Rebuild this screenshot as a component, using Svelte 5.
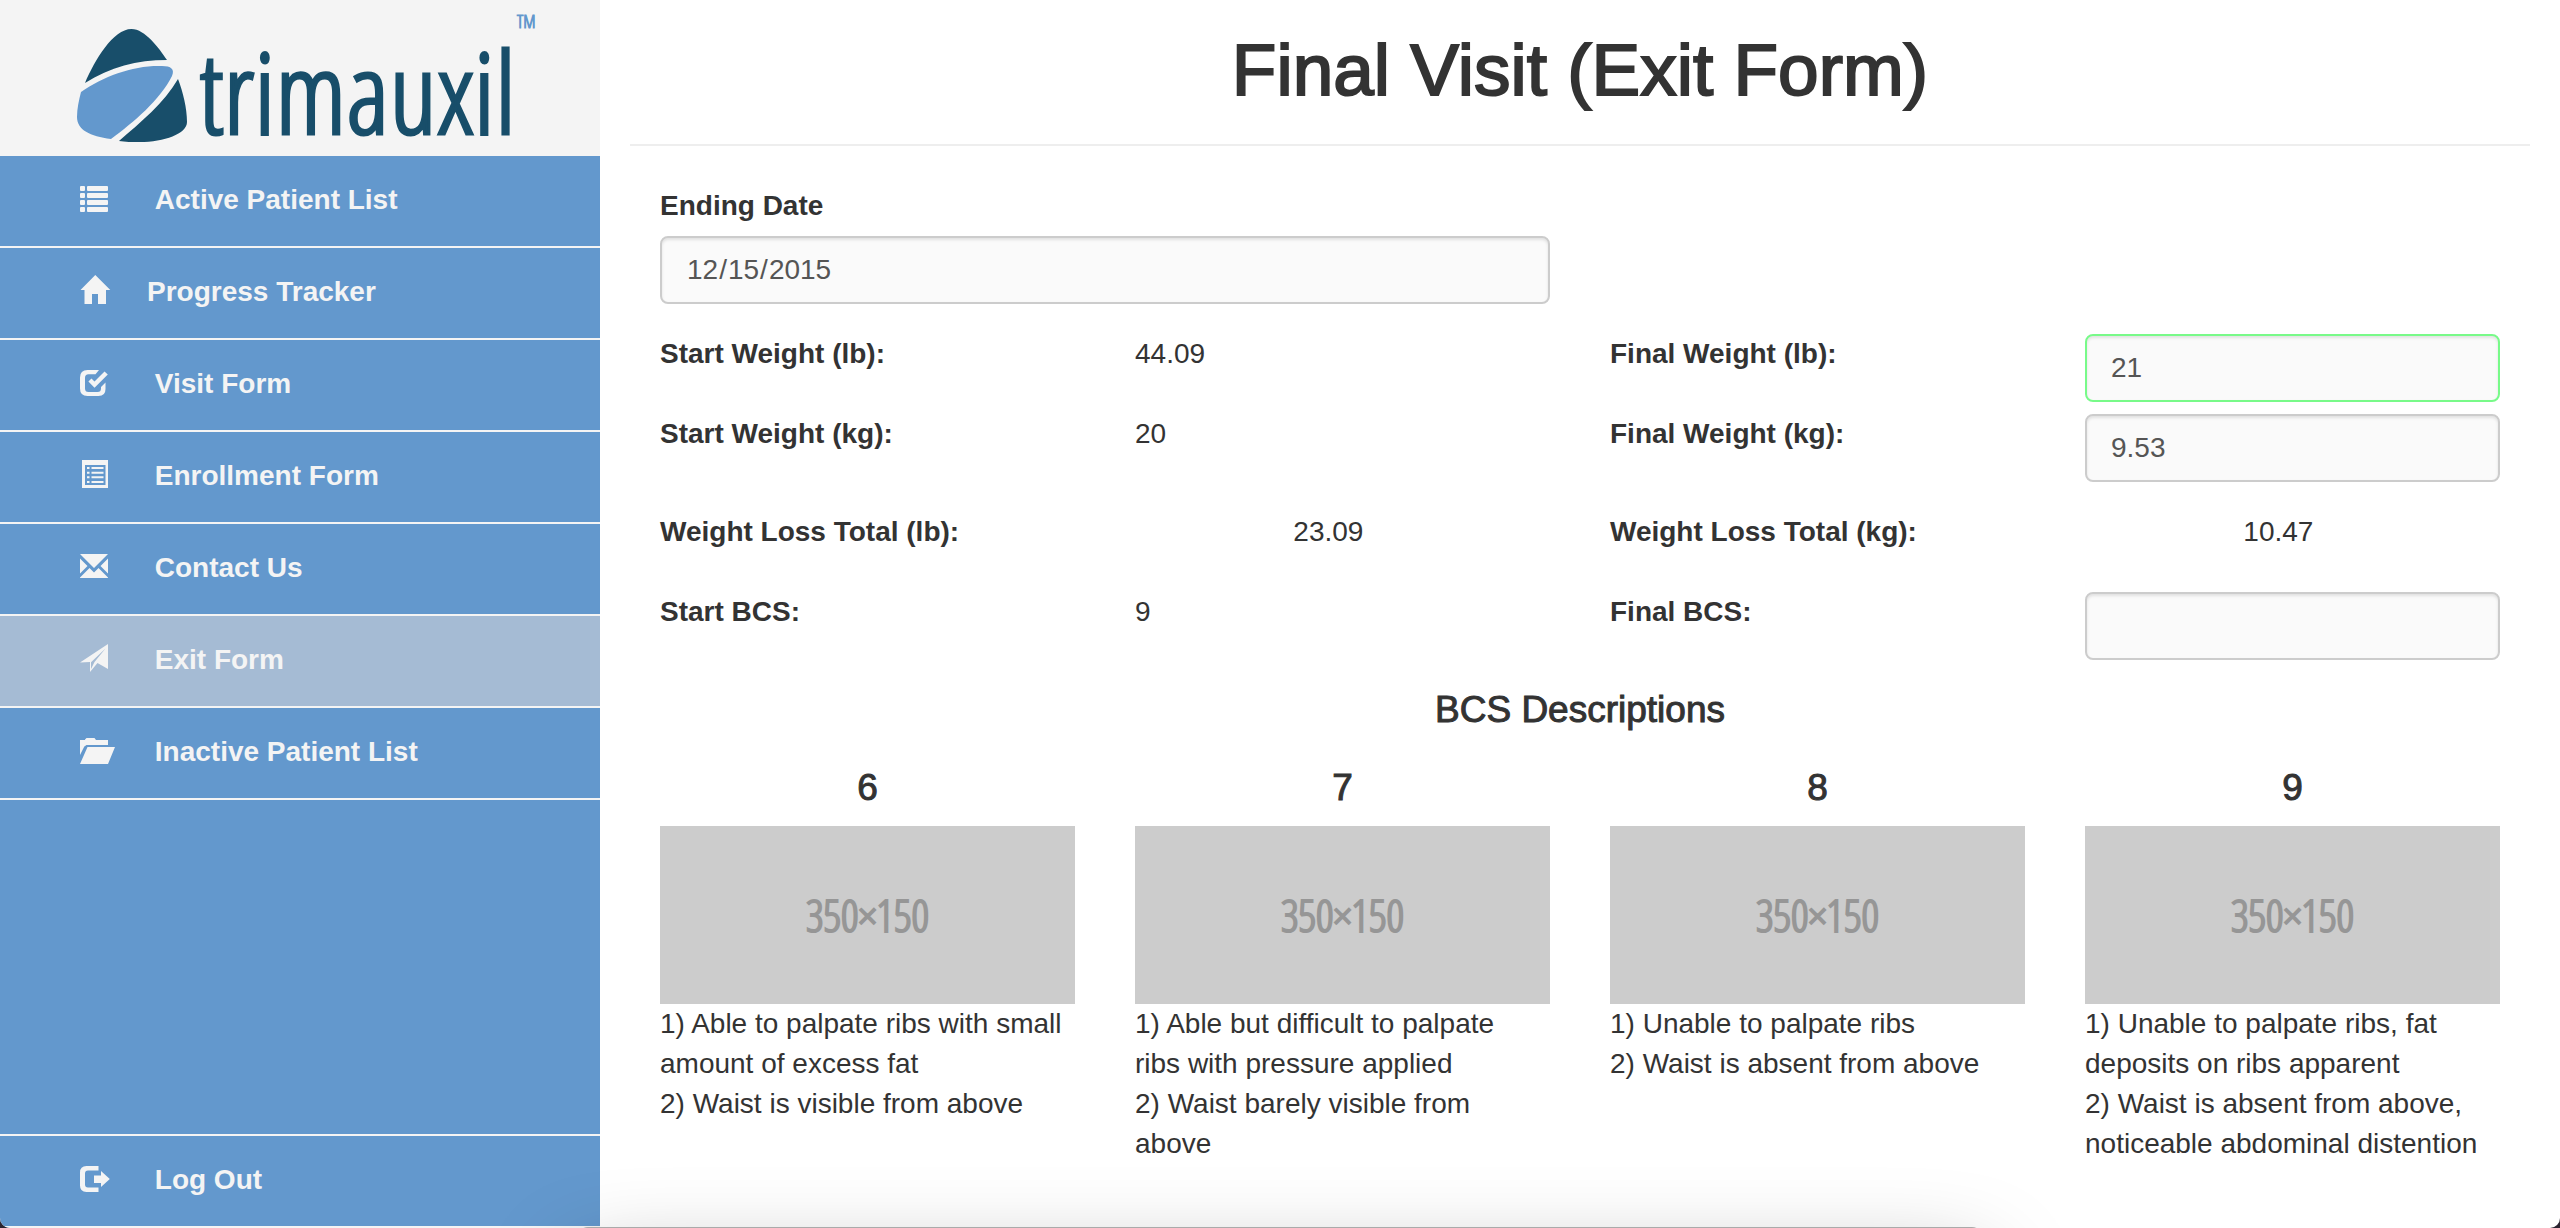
<script>
  const menu = [
    { label: '\u00a0Active Patient List', icon: 'list' },
    { label: 'Progress Tracker', icon: 'home' },
    { label: '\u00a0Visit Form', icon: 'check' },
    { label: '\u00a0Enrollment Form', icon: 'listAlt' },
    { label: '\u00a0Contact Us', icon: 'envelope' },
    { label: '\u00a0Exit Form', icon: 'send', active: true },
    { label: '\u00a0Inactive Patient List', icon: 'folder' }
  ];

  const icons = {
    list: 'M1 3h3a1 1 0 0 1 1 1v3a1 1 0 0 1-1 1H1a1 1 0 0 1-1-1V4a1 1 0 0 1 1-1zM8 3h19a1 1 0 0 1 1 1v3a1 1 0 0 1-1 1H8a1 1 0 0 1-1-1V4a1 1 0 0 1 1-1zM1 10h3a1 1 0 0 1 1 1v3a1 1 0 0 1-1 1H1a1 1 0 0 1-1-1v-3a1 1 0 0 1 1-1zM8 10h19a1 1 0 0 1 1 1v3a1 1 0 0 1-1 1H8a1 1 0 0 1-1-1v-3a1 1 0 0 1 1-1zM1 17h3a1 1 0 0 1 1 1v3a1 1 0 0 1-1 1H1a1 1 0 0 1-1-1v-3a1 1 0 0 1 1-1zM8 17h19a1 1 0 0 1 1 1v3a1 1 0 0 1-1 1H8a1 1 0 0 1-1-1v-3a1 1 0 0 1 1-1zM1 24h3a1 1 0 0 1 1 1v3a1 1 0 0 1-1 1H1a1 1 0 0 1-1-1v-3a1 1 0 0 1 1-1zM8 24h19a1 1 0 0 1 1 1v3a1 1 0 0 1-1 1H8a1 1 0 0 1-1-1v-3a1 1 0 0 1 1-1z',
    home: 'M15.300 0L30.300 14.900H26V29H18V19H12V29H4.500V14.900H.5z',
    check: 'M7.500 3H19L15.500 7.300H8.500Q5 7.300 5 10.800V21.500Q5 25 8.500 25H17.500Q21 25 21 21.500V20L25.500 15.500V22Q25.500 29 18.500 29H7.500Q0 29 0 21.500V10.500Q0 3 7.500 3zM24.500 4.500L27.800 7.500L14.500 20.800L8.400 14.500L11.500 11.400L14.500 14.500z',
    listAlt: 'M2 1H28V29H2zM5 6V26H25.500V6zM7 8H9.500V10H7zM11.500 8H23.500V10H11.500zM7 12.700H9.500V14.700H7zM11.500 12.700H23.500V14.700H11.500zM7 17.300H9.500V19.300H7zM11.500 17.300H23.500V19.300H11.500zM7 22H9.500V24H7zM11.500 22H23.500V24H11.500z',
    envelope: 'M0 3H28L14 17zM0 7.500L7.500 15L0 22.500zM28 7.500V22.500L20.500 15zM9.500 17L14 21.500L18.500 17L28 26.500V27H0V26.500z',
    send: 'M28 1V26L17.500 20L10 29V19L0 19.500zM25.500 5.500L11 19.300V26L14.500 19z',
    folder: 'M5 4.500L6.500 3H14.500L16 5H28V10H6.500L4.300 11.500L0 20V5H5zM7.500 12H35L28 29H0z',
    logout: 'M6.500 3H18.500V7.500H8Q5 7.500 5 10.500V21.500Q5 24.500 8 24.500H18.500V29H6.500Q0 29 0 22.500V9.500Q0 3 6.500 3zM21 8L29.800 16L21 24V20H14V12.500H21z'
  };

  const scores = [
    { score: 6, notes: ['1) Able to palpate ribs with small amount of excess fat', '2) Waist is visible from above'] },
    { score: 7, notes: ['1) Able but difficult to palpate ribs with pressure applied', '2) Waist barely visible from above'] },
    { score: 8, notes: ['1) Unable to palpate ribs', '2) Waist is absent from above'] },
    { score: 9, notes: ['1) Unable to palpate ribs, fat deposits on ribs apparent', '2) Waist is absent from above, noticeable abdominal distention'] }
  ];

  let endingDate = $state('2015-12-15');
  let finalLb = $state('21');
  let finalKg = $state('9.53');
  let finalBcs = $state('');
</script>

{#snippet glyph(name)}
  <svg class="icon" viewBox="0 0 36 30" aria-hidden="true">
    <path fill-rule="evenodd" d={icons[name]} />
  </svg>
{/snippet}

<div class="page">
  <aside class="sidebar">
    <div class="brand">
      <svg class="logo" viewBox="0 0 480 156" role="img" aria-label="trimauxil">
        <path class="dark" d="M9 83C19 60 37 29 55.500 29C69 29 83 48 91 60C61 60 34 67 9 83z" />
        <path class="light" d="M5 92C28 76 58 65 86 66C95 66 99 69 96 76C84 100 58 122 35 139C14 136 1 130 1 117C1 108 3 100 5 92z" />
        <path class="dark" d="M102 79C107 92 111 108 111 122C111 134 88 142 64 142C56 142 49 142 43 141C65 122 88 103 102 79z" />
        <text class="word" x="123" y="134">trimauxil</text>
        <text class="mark" x="441" y="28">TM</text>
      </svg>
    </div>
    <nav class="menu">
      {#each menu as item}
        <a href="#top" class="item" class:active={item.active}>
          {@render glyph(item.icon)}
          <span>{item.label}</span>
        </a>
      {/each}
    </nav>
    <a href="#logout" class="item logout">
      {@render glyph('logout')}
      <span>{'\u00a0'}Log Out</span>
    </a>
  </aside>

  <main class="main">
    <h1>Final Visit (Exit Form)</h1>
    <form class="form">
      <div class="halves">
        <div class="date">
          <label for="ending">Ending Date</label>
          <input id="ending" type="date" bind:value={endingDate} />
        </div>
      </div>
      <div class="quarters">
        <b>Start Weight (lb):</b>
        <span>44.09</span>
        <label for="lb">Final Weight (lb):</label>
        <input id="lb" class="valid" type="text" bind:value={finalLb} />
      </div>
      <div class="quarters">
        <b>Start Weight (kg):</b>
        <span>20</span>
        <label for="kg">Final Weight (kg):</label>
        <input id="kg" type="text" bind:value={finalKg} />
      </div>
      <div class="totals">
        <b>Weight Loss Total (lb):</b><span>23.09</span>
        <b>Weight Loss Total (kg):</b><span>10.47</span>
      </div>
      <div class="quarters">
        <b>Start BCS:</b>
        <span>9</span>
        <label for="bcs">Final BCS:</label>
        <input id="bcs" type="text" bind:value={finalBcs} />
      </div>
    </form>

    <section class="descriptions">
      <h2>BCS Descriptions</h2>
      <div class="quarters">
        {#each scores as s}
          <article>
            <h3>{s.score}</h3>
            <div class="placeholder">350×150</div>
            {#each s.notes as note}
              <p>{note}</p>
            {/each}
          </article>
        {/each}
      </div>
    </section>
  </main>
  <div class="dock" aria-hidden="true"></div>
</div>

<style>
  :global(body) {
    background: #2b2430;
  }
  .page {
    position: relative;
    display: flex;
    min-height: 100vh;
    overflow: hidden;
    border-radius: 0 0 10px 10px;
    background: #fff;
    color: #333;
    font: 28px/40px "Liberation Sans", Arial, sans-serif;
  }
  .page * {
    box-sizing: border-box;
  }
  .sidebar {
    display: flex;
    flex: none;
    flex-direction: column;
    width: 600px;
    background: #6398cd;
  }
  .brand {
    display: flex;
    justify-content: center;
    padding-left: 32px;
    background: #f4f4f4;
  }
  .logo {
    width: 480px;
    height: 156px;
    overflow: visible;
  }
  .dark,
  .word {
    fill: #184e6a;
  }
  .light,
  .mark {
    fill: #6398cd;
  }
  .word {
    font: 300 112px "Open Sans Condensed Light", "Open Sans Condensed", "Liberation Sans", sans-serif;
    stroke: #184e6a;
    stroke-width: 3px;
  }
  .mark {
    font: 300 18px "Open Sans Condensed Light", "Open Sans Condensed", "Liberation Sans", sans-serif;
    stroke: #6398cd;
    stroke-width: 1px;
  }
  .item {
    display: flex;
    align-items: flex-start;
    gap: 31px;
    padding: 24px 20px 26px 80px;
    border-bottom: 2px solid #f4f4f4;
    color: #f4f4f4;
    font-weight: bold;
    text-decoration: none;
  }
  .item.active {
    background: #a5bbd4;
  }
  .icon {
    flex: none;
    width: 36px;
    height: 30px;
    margin-top: 3px;
    fill: currentColor;
  }
  .logout {
    margin-top: auto;
    border-top: 2px solid #f4f4f4;
  }
  .main {
    flex: 1;
    padding: 30px 30px 60px;
  }
  h1,
  h2,
  h3,
  p {
    margin: 0;
  }
  h1,
  h2,
  h3 {
    font-weight: normal;
    text-align: center;
    -webkit-text-stroke: 1px #333;
  }
  h1 {
    padding-bottom: 34px;
    border-bottom: 2px solid #eee;
    font-size: 73px;
    line-height: 80px;
    -webkit-text-stroke: 2px #333;
  }
  h2,
  h3 {
    font-size: 37px;
    line-height: 40px;
  }
  p {
    padding-right: 8px;
  }
  .form {
    display: grid;
    gap: 12px;
    padding: 40px 30px 30px;
  }
  .halves,
  .quarters {
    display: grid;
    grid-template-columns: repeat(2, minmax(0, 1fr));
    align-items: start;
    column-gap: 60px;
  }
  .quarters {
    grid-template-columns: repeat(4, minmax(0, 1fr));
  }
  .date {
    display: grid;
    gap: 10px;
    padding-bottom: 18px;
  }
  .totals {
    display: grid;
    grid-template-columns: 2fr 1fr 2fr 1fr;
    margin: 0 -30px;
    padding: 18px 0 28px;
  }
  .totals > * {
    padding: 0 30px;
  }
  label,
  b {
    font-weight: bold;
  }
  input {
    width: 100%;
    height: 68px;
    padding: 0 24px;
    border: 2px solid #ccc;
    border-radius: 8px;
    outline: none;
    background: #fafafa;
    box-shadow: inset 0 2px 3px rgba(0, 0, 0, 0.1);
    color: #555;
    font: inherit;
  }
  input.valid {
    border-color: #78fa89;
  }
  input::-webkit-calendar-picker-indicator {
    display: none;
  }
  .descriptions {
    display: grid;
    gap: 38px;
    padding: 0 30px;
  }
  .placeholder {
    display: flex;
    align-items: center;
    justify-content: center;
    aspect-ratio: 7 / 3;
    margin-top: 18px;
    background: #ccc;
    color: #969696;
    font: 300 44px "Open Sans Condensed Light", "Open Sans Condensed", "Liberation Sans", sans-serif;
    -webkit-text-stroke: 2px #969696;
  }
  .dock {
    position: absolute;
    top: calc(100% - 1px);
    right: 578px;
    left: 578px;
    height: 120px;
    border-radius: 10px;
    background: #aaa;
    box-shadow: 0 40px 90px rgba(0, 0, 0, 0.35);
    pointer-events: none;
  }
</style>
